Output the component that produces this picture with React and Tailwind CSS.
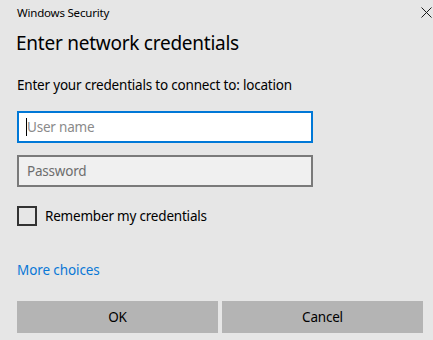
const font = { fontFamily: '"Noto Sans", "Open Sans", sans-serif' }

export default function App() {
  return (
    <div
      className="w-[433px] h-[340px] bg-[#e6e6e6] text-black flex flex-col px-[17px] overflow-hidden"
      style={font}
    >
      <div className="flex items-center justify-between h-[24px] pt-[1px]">
        <span className="text-[11.5px] tracking-[-0.2px] leading-none">Windows Security</span>
        <svg className="w-[11px] h-[11px] mr-[-16px]" viewBox="0 0 11 11">
          <path d="M0.5 0.5 L10.5 10.5 M10.5 0.5 L0.5 10.5" stroke="#1a1a1a" strokeWidth="1" />
        </svg>
      </div>

      <h1 className="mt-[7px] ml-[-1px] text-[19px] tracking-[-0.25px] leading-[24px] font-normal">
        Enter network credentials
      </h1>

      <p className="mt-[20px] text-[13.5px] tracking-[-0.2px] leading-[20px]">
        Enter your credentials to connect to: location
      </p>

      <div className="mt-[16px] w-[296px] h-[32px] bg-white border-2 border-[#0078d7] flex items-center px-[7px]">
        <span className="w-px h-[18px] bg-black" />
        <span className="text-[13.5px] tracking-[-0.2px] text-[#8a8a8a]">User name</span>
      </div>

      <div className="mt-[12px] w-[296px] h-[32px] bg-[#f0f0f0] border-2 border-[#7a7a7a] flex items-center px-[8px]">
        <span className="text-[13.5px] tracking-[-0.2px] text-[#6d6d6d]">Password</span>
      </div>

      <label className="mt-[19px] flex items-center gap-[8px]">
        <span className="w-[20px] h-[20px] border-2 border-[#333]" />
        <span className="text-[13.5px] tracking-[-0.2px]">Remember my credentials</span>
      </label>

      <a className="mt-[34px] text-[13.5px] tracking-[-0.1px] leading-[20px] text-[#0a78d6]">More choices</a>

      <div className="mt-[21px] flex gap-[4px] w-[406px]">
        <button className="flex-1 h-[32px] bg-[#b4b4b4] text-[13.5px] tracking-[-0.2px]">OK</button>
        <button className="flex-1 h-[32px] bg-[#b4b4b4] text-[13.5px] tracking-[-0.2px]">Cancel</button>
      </div>
    </div>
  )
}
